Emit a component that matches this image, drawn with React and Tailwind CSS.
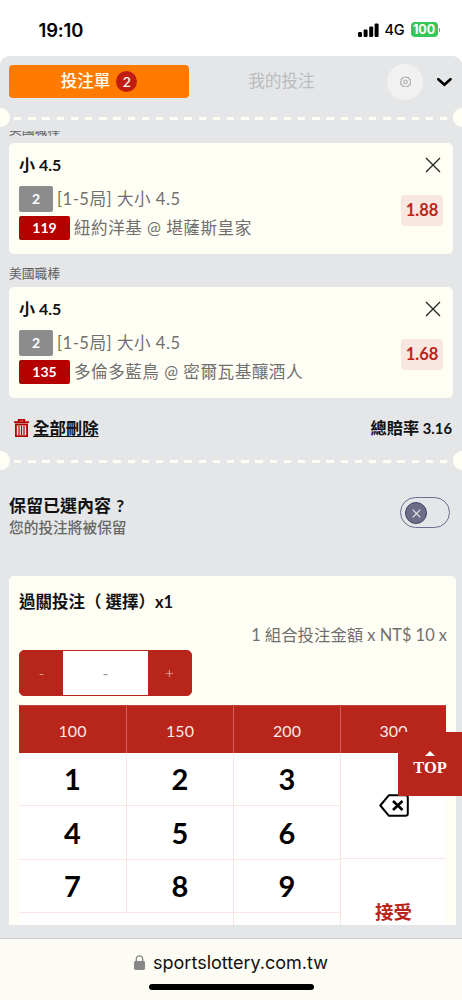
import { useState } from 'react';

const bets = [
  { id: 1, league: '美國職棒', pick: '小 4.5', count: '2', market: '[1-5局] 大小 4.5', code: '119', match: '紐約洋基 @ 堪薩斯皇家', odds: '1.88' },
  { id: 2, league: '美國職棒', pick: '小 4.5', count: '2', market: '[1-5局] 大小 4.5', code: '135', match: '多倫多藍鳥 @ 密爾瓦基釀酒人', odds: '1.68' },
];

const amounts = ['100', '150', '200', '300'];
const digits = ['1', '2', '3', '4', '5', '6', '7', '8', '9'];

const StatusBar = () => (
  <div className="h-14 shrink-0 flex items-start justify-between pl-[38.5px] pr-[22px] font-['Inter',sans-serif] text-black">
    <span className="mt-[18px] text-[18.4px] leading-6 font-semibold tracking-[-0.1px]">19:10</span>
    <div className="mt-[18px] h-6 flex items-center">
      <svg width="21" height="14" viewBox="0 0 21 14" className="mr-[6px] -mt-px">
        <rect x="0" y="9" width="4" height="5" rx="1.2" />
        <rect x="5.6" y="6.6" width="4" height="7.4" rx="1.2" />
        <rect x="11.2" y="3.6" width="4" height="10.4" rx="1.2" />
        <rect x="16.6" y="0.4" width="4" height="13.6" rx="1.2" />
      </svg>
      <span className="w-[26px] text-[14.5px] font-medium tracking-[-0.3px]">4G</span>
      <span className="w-[27px] h-[15px] -mt-px rounded-[4px] bg-[#34c759] text-white text-[12.5px] leading-[15px] font-bold text-center">100</span>
      <span className="ml-px -mt-px w-[1.5px] h-[4px] rounded-r bg-[#34c759]" />
    </div>
  </div>
);

const Divider = () => (
  <div className="h-[19px] shrink-0 flex items-center justify-between">
    <span className="w-[9.5px] h-[19px] rounded-r-full bg-[#fffef5]" />
    <span className="mt-[2px] w-[434px] h-[3px] bg-[repeating-linear-gradient(to_right,#fffef5_0_7.4px,transparent_7.4px_14.2px)]" />
    <span className="w-[9.5px] h-[19px] rounded-l-full bg-[#fffef5]" />
  </div>
);

const BetCard = ({ bet, onRemove }) => (
  <div>
    <div className="h-[33px] pt-[9px] text-[12.8px] leading-5 text-[#606060]">{bet.league}</div>
    <div className="h-[111px] rounded-[5px] bg-[#fffef5] pl-[10px] pr-[10px] pt-[10px]">
      <div className="flex items-center justify-between h-6">
        <span className="text-[16px] font-bold text-[#111]">{bet.pick}</span>
        <button type="button" onClick={onRemove} className="mr-[2px]">
          <svg width="16" height="16" viewBox="0 0 16 16" stroke="#222" strokeWidth="1.3">
            <path d="M1 1l14 14M15 1L1 15" />
          </svg>
        </button>
      </div>
      <div className="mt-[9px] flex justify-between">
        <div className="text-[16.6px] text-[#707070]">
          <div className="flex items-center h-[26px]">
            <span className="w-[34px] h-[26px] rounded-[2px] bg-[#8c8c8c] text-white text-[14px] leading-[26px] font-bold text-center">{bet.count}</span>
            <span className="ml-[4px] tracking-[0.5px] whitespace-nowrap">{bet.market}</span>
          </div>
          <div className="mt-1 flex items-center h-6">
            <span className="w-[51px] h-6 rounded-[2px] bg-[#b50000] text-white text-[14px] leading-6 font-bold text-center">{bet.code}</span>
            <span className="ml-[4px] tracking-[0.5px] whitespace-nowrap">{bet.match}</span>
          </div>
        </div>
        <span className="mt-[9px] w-[42px] h-[31px] rounded-[4px] bg-[#f8e7e0] text-[#b7251b] text-[16.5px] leading-[31px] font-bold text-center">{bet.odds}</span>
      </div>
    </div>
  </div>
);

const Keypad = () => (
  <div className="mt-[9px] w-[427px]">
    <div className="grid grid-cols-[108px_107px_107px_1fr] h-12 bg-[#b7251b] text-[#fbe9e6] text-[16px] border-t border-[#c1443b]">
      {amounts.map((amount) => (
        <button key={amount} type="button" className="pt-[3px] border-r border-[#cf625b] last:border-r-0">{amount}</button>
      ))}
    </div>
    <div className="flex bg-white">
      <div className="w-[322px] grid grid-cols-[108px_107px_107px] text-[29px] font-bold text-black">
        {digits.map((digit) => (
          <button key={digit} type="button" className="h-[53.3px] border-r border-b border-[#fbe5e3]">{digit}</button>
        ))}
        <div className="h-[53px]" />
        <div className="h-[53px] border-r border-[#fbe5e3]" />
        <div className="h-[53px] border-r border-[#fbe5e3]" />
      </div>
      <div className="flex-1 flex flex-col">
        <button type="button" className="h-[106px] flex items-center justify-center border-b border-[#fbe5e3]">
          <svg width="30" height="23" viewBox="0 0 30 23" fill="none" stroke="#000" strokeWidth="2">
            <path d="M10 1.2H26.5Q28.8 1.2 28.8 3.5V19.5Q28.8 21.8 26.5 21.8H10L1.3 11.5Z" strokeLinejoin="round" />
            <path d="M14 7l9.5 9M23.5 7L14 16" strokeWidth="2.6" />
          </svg>
        </button>
        <button type="button" className="h-[107px] text-[18.5px] font-bold text-[#b7251b]">接受</button>
      </div>
    </div>
  </div>
);

const App = () => {
  const [slips, setSlips] = useState(bets);

  return (
    <div className="w-[462px] h-[1000px] flex flex-col overflow-hidden bg-white font-['Lato','Noto_Sans_CJK_TC',sans-serif]">
      <StatusBar />

      <div className="relative h-[882px] shrink-0 flex flex-col overflow-hidden rounded-t-[9px] bg-[#e4e6e8]">
        {/* Tabs */}
        <div className="shrink-0 flex items-center h-[43px] pt-[8px] pl-[9px] mb-[9px]">
          <button type="button" className="w-[180px] h-[33px] flex items-center justify-center gap-[6px] rounded-[4px] bg-[#ff7b00] text-[#fffef5] text-[16.5px] font-medium">
            投注單
            <span className="w-[21px] h-[21px] rounded-full bg-[#c11d13] text-white text-[14px] leading-[21px]">2</span>
          </button>
          <button type="button" className="w-[185px] text-[16.5px] text-[#b9bbbd]">我的投注</button>
          <span className="ml-[13px] w-9 h-9 rounded-full bg-[#f1f1f2] flex items-center justify-center">
            <svg width="11" height="11" viewBox="0 0 22 22" fill="none" stroke="#999" strokeWidth="1.8">
              <path d="M11 1l2.4 2.3 3.2-.8 1 3.1 3.2 1-.8 3.2L22 12l-2.1 2.3.7 3.1-3.1 1-1.2 3-3.1-.7L11 22l-2.3-1.6-3 .7-1.2-3-3.1-1 .7-3.1L.5 12l2-2.2-.8-3.2 3.2-1 1-3.1 3.1.8z" strokeLinejoin="round" />
              <circle cx="11" cy="11.8" r="3.6" />
            </svg>
          </span>
          <svg width="15" height="9" viewBox="0 0 15 9" className="ml-[14px] mt-px" fill="none" stroke="#000" strokeWidth="2.6">
            <path d="M1.3 1.2l6.1 5.6 6.1-5.6" strokeLinecap="round" />
          </svg>
        </div>
        <Divider />

        {/* Scrolling slip content */}
        <div className="mt-1 h-[794px] shrink-0 overflow-hidden">
          <div className="-mt-[21px] w-[453px] pl-[9px]">
            {slips.map((bet) => (
              <BetCard key={bet.id} bet={bet} onRemove={() => setSlips(slips.filter((s) => s.id !== bet.id))} />
            ))}
            <div className="h-[53px] pt-2 pr-px flex items-center justify-between font-bold text-[#111]">
              <button type="button" onClick={() => setSlips([])} className="ml-[5px] flex items-center gap-1 text-[16.4px]">
                <svg width="15" height="18" viewBox="0 0 15 18" fill="none" stroke="#b50000" strokeWidth="1.8">
                  <path d="M0 3.2h15M4.7 3V.9h5.6V3" />
                  <path d="M1.9 5.5v11.6h11.2V5.5z" />
                  <path d="M5 7v9M7.5 7v9M10 7v9" strokeWidth="1.2" />
                </svg>
                <span className="underline underline-offset-[2px] decoration-[1.3px]">全部刪除</span>
              </button>
              <span className="text-[14.8px]"><span className="text-[16.2px]">總賠率</span> 3.16</span>
            </div>
          </div>
          <Divider />

          <div className="h-[106px] pl-[9px] pr-[12px] pt-[24px] flex justify-between">
            <div>
              <div className="text-[17px] leading-[23px] font-bold text-[#111]">保留已選內容 <span className="ml-px">?</span></div>
              <div className="text-[14.7px] leading-[20px] font-medium text-[#666]">您的投注將被保留</div>
            </div>
            <span className="mt-[3px] w-[50px] h-[31px] rounded-full border border-[#706b91] p-1">
              <span className="w-[22px] h-[22px] rounded-full bg-[#6e6d88] border border-[#454269] flex items-center justify-center">
                <svg width="9" height="9" viewBox="0 0 9 9" stroke="#eee" strokeWidth="1.1">
                  <path d="M.7.7l7.6 7.6M8.3.7L.7 8.3" />
                </svg>
              </span>
            </span>
          </div>

          {/* Parlay stake */}
          <div className="ml-[9px] w-[447px] rounded-t-[5px] bg-[#fffef5] pl-[10px] pr-[9px] pt-[14px]">
            <div className="text-[16.5px] leading-6 font-bold text-[#111]">過關投注（ 選擇）x1</div>
            <div className="mt-[9px] text-[16.4px] leading-6 text-right text-[#707070]">1 組合投注金額 x NT$ 10 x</div>
            <div className="mt-[3px] w-[173px] h-[46px] flex overflow-hidden rounded-[5px] border border-[#b7251b] bg-[#b7251b] text-[16px] text-[#f0c9c5]">
              <button type="button" className="w-[43px] font-light">-</button>
              <span className="w-[85px] bg-white text-[#999] flex items-center justify-center">-</span>
              <button type="button" className="flex-1 font-light">+</button>
            </div>
            <Keypad />
          </div>
        </div>

        <button type="button" className="absolute right-0 top-[676px] w-16 h-16 flex flex-col items-center bg-[#b7251b] text-white">
          <svg width="10" height="5" viewBox="0 0 10 5" className="mt-[19px]" fill="#fff">
            <path d="M0 5L5 0l5 5z" />
          </svg>
          <span className="mt-[3px] font-['Liberation_Serif',serif] font-bold text-[16.5px] leading-[18px]">TOP</span>
        </button>
      </div>

      {/* Browser address bar */}
      <div className="flex-1 flex flex-col items-center border-t border-[#cfcfca] bg-[#fcfbf4] font-['Inter',sans-serif]">
        <div className="mt-[11px] h-6 flex items-center gap-2 text-[18px] text-[#111]">
          <svg width="11" height="15" viewBox="0 0 11 15">
            <path d="M2.3 7V4a3.2 3.2 0 0 1 6.4 0v3" fill="none" stroke="#888" strokeWidth="1.3" />
            <rect y="6" width="11" height="9" rx="1.4" fill="#888" />
          </svg>
          sportslottery.com.tw
        </div>
        <span className="mt-[10px] w-[165px] h-[6px] rounded-full bg-black" />
      </div>
    </div>
  );
};

export default App;
